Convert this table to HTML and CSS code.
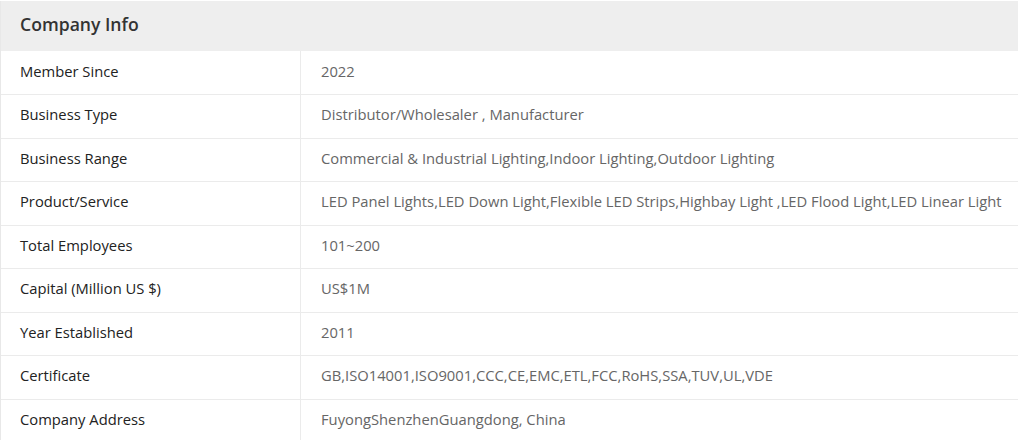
FILE: index.html
```html
<!DOCTYPE html>
<html>
<head>
<meta charset="utf-8">
<link rel="stylesheet" href="styles.css">
</head>
<body>
<div class="info">
  <div class="info-head">Company Info</div>
  <table class="info-table">
    <tr><td class="label">Member Since</td><td class="value">2022</td></tr>
    <tr><td class="label">Business Type</td><td class="value">Distributor/Wholesaler , Manufacturer</td></tr>
    <tr><td class="label">Business Range</td><td class="value">Commercial &amp; Industrial Lighting,Indoor Lighting,Outdoor Lighting</td></tr>
    <tr><td class="label">Product/Service</td><td class="value">LED Panel Lights,LED Down Light,Flexible LED Strips,Highbay Light ,LED Flood Light,LED Linear Light</td></tr>
    <tr><td class="label">Total Employees</td><td class="value">101~200</td></tr>
    <tr><td class="label">Capital (Million US $)</td><td class="value">US$1M</td></tr>
    <tr><td class="label">Year Established</td><td class="value">2011</td></tr>
    <tr><td class="label">Certificate</td><td class="value">GB,ISO14001,ISO9001,CCC,CE,EMC,ETL,FCC,RoHS,SSA,TUV,UL,VDE</td></tr>
    <tr><td class="label">Company Address</td><td class="value">FuyongShenzhenGuangdong, China</td></tr>
  </table>
</div>
</body>
</html>
```
FILE: styles.css
```css
html, body {
  margin: 0;
  padding: 0;
  background: #fff;
}
body {
  font-family: "Open Sans", "Noto Sans", sans-serif;
  padding-top: 1px;
}
.info {
  width: 1018px;
  border-left: 1px solid #e8e8e8;
  box-sizing: border-box;
}
.info-head {
  height: 50px;
  background: #eeeeee;
  color: #333;
  font-size: 17.6px;
  font-weight: 600;
  line-height: 47px;
  padding-left: 19px;
}
.info-table {
  width: 100%;
  border-collapse: collapse;
  font-size: 14.75px;
}
.info-table tr {
  height: 43.5px;
  border-bottom: 1px solid #ebebeb;
}
.info-table td {
  padding: 0 0 4px 0;
  vertical-align: middle;
}
.label {
  width: 280px;
  padding-left: 19px !important;
  color: #222;
  border-right: 1px solid #ebebeb;
}
.value {
  padding-left: 20px !important;
  color: #666;
  white-space: nowrap;
}
```
